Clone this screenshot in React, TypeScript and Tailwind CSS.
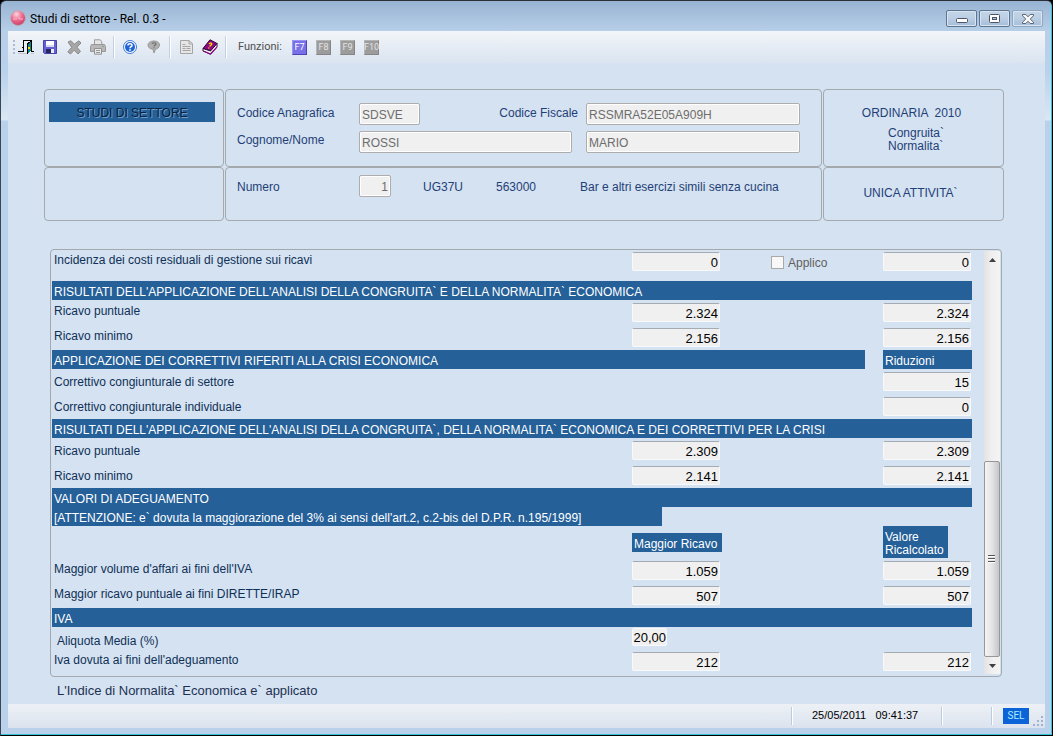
import { useState } from "react";
import type { ReactNode } from "react";

type Row = {
  label: string;
  first?: string;
  second: string;
  low?: boolean;
};

const congruita: Row[] = [
  { label: "Ricavo puntuale", first: "2.324", second: "2.324" },
  { label: "Ricavo minimo", first: "2.156", second: "2.156" },
];

const correttivi: Row[] = [
  { label: "Correttivo congiunturale di settore", second: "15", low: true },
  { label: "Correttivo congiunturale individuale", second: "0", low: true },
];

const risultatiCrisi: Row[] = [
  { label: "Ricavo puntuale", first: "2.309", second: "2.309", low: true },
  { label: "Ricavo minimo", first: "2.141", second: "2.141", low: true },
];

const adeguamento: Row[] = [
  { label: "Maggior volume d'affari ai fini dell'IVA", first: "1.059", second: "1.059" },
  { label: "Maggior ricavo puntuale ai fini DIRETTE/IRAP", first: "507", second: "507" },
];

const rowGrid = "grid grid-cols-[minmax(0,1fr)_88px_163px_88px] pr-px";

function Amount({ value, label }: { value: string; label: string }) {
  return (
    <input
      readOnly
      value={value}
      aria-label={label}
      className="h-[19px] w-full min-w-0 rounded-[2px] border border-t-[#a5abb3] border-x-[#f8f9fb] border-b-[#f8f9fb] bg-[#f0f0f0] px-px pt-0.5 text-right text-[13px] leading-4 text-black outline-none"
    />
  );
}

function DataRow({ row }: { row: Row }) {
  return (
    <div className={`${rowGrid} h-[25px] pt-[3px]`}>
      <span className={`pl-0.5 leading-4 ${row.low ? "pt-0.5" : ""}`}>{row.label}</span>
      {row.first ? <Amount value={row.first} label={row.label} /> : <span />}
      <span />
      <Amount value={row.second} label={`${row.label}, ricalcolato`} />
    </div>
  );
}

function Bar({ children }: { children: ReactNode }) {
  return <h2 className="h-[19px] bg-[#256099] pt-[3px] pl-0.5 leading-4 whitespace-nowrap text-white">{children}</h2>;
}

function Panel({ children }: { children?: ReactNode }) {
  return <div className="rounded-[4px] border border-[#a3a9ad]">{children}</div>;
}

function Field({ id, value, label, right }: { id: string; value: string; label?: string; right?: boolean }) {
  return (
    <input
      id={id}
      readOnly
      value={value}
      aria-label={label}
      className={`h-[22px] w-full min-w-0 rounded-[2px] border border-[#adadad] bg-[#f0f0f0] px-0.5 pt-0.5 text-[#6d6d6d] shadow-[inset_0_0_0_1px_#fff] outline-none ${right ? "text-right" : ""}`}
    />
  );
}

function ToolButton({ label, children }: { label: string; children: ReactNode }) {
  return (
    <button type="button" aria-label={label} className="flex size-6 items-center justify-center">
      {children}
    </button>
  );
}

function KeyButton({ name, active }: { name: string; active?: boolean }) {
  return (
    <button
      type="button"
      className={`flex size-[15px] items-center justify-center border font-['Liberation_Sans_Narrow','Roboto',sans-serif] text-[9px] leading-none ${
        active
          ? "border-t-[#9a93f5] border-r-[#4b44b8] border-b-[#4b44b8] border-l-[#9a93f5] bg-[#7770e6] text-white"
          : "border-t-[#b5b5b5] border-r-[#858585] border-b-[#858585] border-l-[#b5b5b5] bg-[#9c9c9c] text-[#e4e4e4]"
      }`}
    >
      {name}
    </button>
  );
}

function Separator() {
  return <div className="mx-[3px] h-[22px] w-0.5 border-r border-l border-r-white border-l-[#c2d0e0]" />;
}

function TitleBar() {
  const frame =
    "flex h-[17px] w-[31px] items-center justify-center rounded-[2px] border bg-linear-to-b from-[#c3d5e8] via-[#bccfe4] via-45% to-[#a5bdd8] shadow-[inset_0_0_0_1px_#d8e4f0]";
  return (
    <header className="flex h-[30px] items-start">
      <svg width="16" height="16" viewBox="0 0 16 16" className="mt-[9px] ml-0.5">
        <defs>
          <radialGradient id="ball" cx="40%" cy="25%" r="75%">
            <stop offset="0" stopColor="#fbd3df" />
            <stop offset="0.5" stopColor="#ee6f92" />
            <stop offset="1" stopColor="#c83e68" />
          </radialGradient>
        </defs>
        <circle cx="8" cy="8" r="7.5" fill="url(#ball)" stroke="#b5aeb8" />
        <path d="M3 9h2M6 8v2M8 8h2v2M12 8v2" stroke="#f6b9ca" fill="none" />
      </svg>
      <h1 className="mt-[10px] ml-1 flex-1 font-['Roboto',sans-serif] text-xs leading-4 text-black">
        Studi di settore - Rel. 0.3 -
      </h1>
      <div className="mt-[9px] mr-0.5 flex gap-0.5">
        <button type="button" aria-label="Riduci a icona" className={`${frame} border-[#5d7590]`}>
          <svg width="12" height="6" viewBox="0 0 12 6" className="mt-1">
            <rect x="0.5" y="0.5" width="11" height="4" rx="1" fill="#fff" stroke="#4c5567" />
          </svg>
        </button>
        <button type="button" aria-label="Ingrandisci" className={`${frame} border-[#5d7590]`}>
          <svg width="12" height="10" viewBox="0 0 12 10">
            <rect x="0.5" y="0.5" width="10" height="8" rx="1" fill="#fff" stroke="#4c5567" />
            <rect x="3.5" y="3.5" width="4" height="2" fill="#b3c8df" stroke="#4c5567" />
          </svg>
        </button>
        <button type="button" aria-label="Chiudi" className={`${frame} border-[#8fa6c0]`}>
          <svg width="12" height="10" viewBox="0 0 12 10">
            <path
              d="M.5 .5H3.8L6 2.8L8.2 .5H11.5V1.8L8.2 5L11.5 8.2V9.5H8.2L6 7.2L3.8 9.5H.5V8.2L3.8 5L.5 1.8Z"
              fill="#f7f7f7"
              stroke="#5a6375"
            />
          </svg>
        </button>
      </div>
    </header>
  );
}

function Toolbar() {
  return (
    <div className="flex h-8 items-center bg-linear-to-b from-[#f2f5f9] to-[#dae4f0]">
      <svg width="4" height="16" viewBox="0 0 4 16" className="ml-1" shapeRendering="crispEdges">
        <path d="M1 1h2v2H1zM1 5h2v2H1zM1 9h2v2H1zM1 13h2v2H1z" fill="#a9bdd6" />
      </svg>
      <div className="-ml-0.5 flex items-center">
        <ToolButton label="Esci">
          <svg width="16" height="16" viewBox="0 0 16 16" shapeRendering="crispEdges">
            <path d="M0 14.5h9M13 14.5h3" stroke="#c3c8ce" />
            <path d="M0 12.5h5.5V1.5H13.5V12.5H16M5.5 8.5H4" stroke="#000" fill="none" />
            <path d="M9 5L13 2V12L9 15Z" fill="#0e8484" />
            <path d="M9.5 15V5L13 2" stroke="#000" fill="none" />
            <path d="M10 8h2v2h-2z" fill="#ffe000" />
          </svg>
        </ToolButton>
        <ToolButton label="Salva">
          <svg width="14" height="14" viewBox="0 0 14 14">
            <path d="M.5 .5H13.5V13.5H1.5L.5 12.5Z" fill="#6560d4" stroke="#4643a8" />
            <path d="M3 1h8v6H3z" fill="#fff" />
            <path d="M3 5h8v2H3z" fill="#d3d9f2" />
            <path d="M3 9h8v4H3z" fill="#26265c" />
            <path d="M8 9h3v4H8z" fill="#e8eaf5" />
          </svg>
        </ToolButton>
        <ToolButton label="Elimina">
          <svg width="15" height="15" viewBox="0 0 15 15">
            <path
              d="M1 2L4 .7L7.3 4.2L12 .8L14 3L10 7.2L13.5 11.5L11 14L7.2 10.2L3.5 14L.8 12L4.6 7.3Z"
              fill="#a6a6a6"
              stroke="#8c8c8c"
            />
          </svg>
        </ToolButton>
        <ToolButton label="Stampa">
          <svg width="16" height="16" viewBox="0 0 16 16">
            <path d="M4.5 6V.8h5.500l1.800 1.700V6" fill="#e5e5e5" stroke="#999" />
            <path d="M1.5 5.500h13l1 2V12.500H.5V7.500Z" fill="#b8b8b8" stroke="#989898" />
            <path d="M4.5 9.500h7V15.200h-7z" fill="#e8e8e8" stroke="#929292" />
            <path d="M6 11.500h4M6 13.500h4M12 7.500h2" stroke="#999" />
          </svg>
        </ToolButton>
      </div>
      <Separator />
      <ToolButton label="Guida">
        <svg width="14" height="14" viewBox="0 0 14 14">
          <circle cx="7" cy="7" r="6.500" fill="#fff" stroke="#3f7bd6" />
          <circle cx="7" cy="7" r="5" fill="#1f64d6" />
          <path d="M5 5.500C5 3.300 9 3.300 9 5.400C9 6.700 7 6.700 7 8.200" fill="none" stroke="#fff" strokeWidth="1.500" />
          <circle cx="7" cy="10" r="0.900" fill="#fff" />
        </svg>
      </ToolButton>
      <ToolButton label="Suggerimento">
        <svg width="14" height="14" viewBox="0 0 14 14">
          <path
            d="M7 1C10.500 1 12.500 2.800 12.500 5C12.500 7.500 10 9 8.500 9.200L7 13L6 9.200C3 9 1 7.500 1 5C1 2.800 3.500 1 7 1Z"
            fill="#b0b0b0"
            stroke="#989898"
          />
          <path d="M5 4C5 2.300 9 2.300 9 4C9 5.200 7 5 7 6.300M7 7.200v1" fill="none" stroke="#6e6e6e" strokeWidth="1.200" />
        </svg>
      </ToolButton>
      <Separator />
      <ToolButton label="Documento">
        <svg width="13" height="14" viewBox="0 0 13 14">
          <path d="M.5 .5H9L12.500 3.500V13.500H.5Z" fill="#e6e6e6" stroke="#a4a4a4" />
          <path d="M2.500 4.500h3M2.500 6.500h8M2.500 8.500h3M6.500 8.500h4M2.500 10.500h8M9 1v3h3" stroke="#a4a4a4" fill="none" />
        </svg>
      </ToolButton>
      <ToolButton label="Manuale">
        <svg width="16" height="16" viewBox="0 0 16 16">
          <path d="M1 9.500L8 .8L15 4.500L8.500 12Z" fill="#8c0a84" stroke="#30022c" />
          <path d="M1 9.500V12L8.500 15.200L15 7.800V4.500L8.500 12Z" fill="#fff" stroke="#30022c" />
          <path d="M1.500 12L8.500 15L15 8" fill="none" stroke="#8c0a84" strokeWidth="1.200" />
          <path d="M7 5C8 3.300 10.500 4.300 9.500 5.700C9 6.500 8 6.300 7.700 7.500M7 8.500L6.500 9.500" fill="none" stroke="#ffd900" strokeWidth="1.300" />
        </svg>
      </ToolButton>
      <Separator />
      <span className="ml-2 w-[54px] font-['Roboto',sans-serif] text-[11px] text-[#4f4f4f]">Funzioni:</span>
      <div className="flex gap-[9px]">
        <KeyButton name="F7" active />
        <KeyButton name="F8" />
        <KeyButton name="F9" />
        <KeyButton name="F10" />
      </div>
    </div>
  );
}

function Summary() {
  return (
    <section className="grid grid-cols-[180px_minmax(0,1fr)_181px] grid-rows-[78px_54px] gap-x-px text-[#1f3f77]">
      <Panel>
        <h2 className="mt-3 mr-2 ml-1 h-5 bg-[#256099] pt-[3px] text-center leading-4 text-[#0a2340] [text-shadow:1px_1px_0_#6f9cc8]">
          STUDI DI SETTORE
        </h2>
      </Panel>
      <Panel>
        <div className="grid grid-cols-[122px_minmax(0,213fr)_14px_minmax(0,214fr)] gap-y-1.5 pt-[13px] pr-[21px] pl-[11px]">
          <label htmlFor="codice" className="pt-0.5 leading-4">
            Codice Anagrafica
          </label>
          <div className="flex justify-between">
            <div className="w-[61px]">
              <Field id="codice" value="SDSVE" />
            </div>
            <label htmlFor="fiscale" className="-mr-1.5 pt-0.5 leading-4">
              Codice Fiscale
            </label>
          </div>
          <span />
          <Field id="fiscale" value="RSSMRA52E05A909H" />
          <label htmlFor="cognome" className="pt-px leading-4">
            Cognome/Nome
          </label>
          <Field id="cognome" value="ROSSI" />
          <span />
          <Field id="nome" value="MARIO" label="Nome" />
        </div>
      </Panel>
      <Panel>
        <div className="pt-[15px] pr-1 text-center leading-4 whitespace-pre">ORDINARIA  2010</div>
        <div className="mt-1.5 pl-16 leading-[13px]">
          Congruita`
          <br />
          Normalita`
        </div>
      </Panel>
      <Panel />
      <Panel>
        <div className="flex pt-[7px] pl-[11px] leading-4">
          <label htmlFor="numero" className="w-[122px] pt-1">
            Numero
          </label>
          <div className="w-8">
            <Field id="numero" value="1" right />
          </div>
          <span className="w-[73px] pt-1 pl-8">UG37U</span>
          <span className="w-[84px] pt-1 pl-8">563000</span>
          <span className="pt-1 pl-8">Bar e altri esercizi simili senza cucina</span>
        </div>
      </Panel>
      <Panel>
        <div className="pt-[17px] pr-1.5 text-center leading-4">UNICA ATTIVITA`</div>
      </Panel>
    </section>
  );
}

function ScrollBar() {
  return (
    <div className="flex w-4 flex-col bg-linear-to-r from-[#e3e3e3] via-[#f0f0f0] to-[#f4f4f4]">
      <button type="button" aria-label="Scorri su" className="flex h-[17px] items-center justify-center">
        <svg width="7" height="4" viewBox="0 0 7 4">
          <path d="M3.500 0L7 4H0Z" fill="#404040" />
        </svg>
      </button>
      <div className="flex-1" />
      <div className="flex h-[196px] items-center justify-center rounded-[2px] border border-[#979797] bg-linear-to-r from-[#f5f5f5] via-[#e4e4e6] via-50% to-[#c3c5c9]">
        <svg width="8" height="9" viewBox="0 0 8 9" shapeRendering="crispEdges">
          <path d="M0 .5h7M0 3.500h7M0 6.500h7" stroke="#555" />
          <path d="M0 1.500h7M0 4.500h7M0 7.500h7" stroke="#fff" />
        </svg>
      </div>
      <button type="button" aria-label="Scorri giù" className="flex h-[17px] items-center justify-center">
        <svg width="7" height="4" viewBox="0 0 7 4">
          <path d="M0 0H7L3.500 4Z" fill="#404040" />
        </svg>
      </button>
    </div>
  );
}

function Results() {
  const [applico, setApplico] = useState(false);
  const [aliquota, setAliquota] = useState("20,00");

  return (
    <section className="mr-0.5 ml-1.5 flex rounded-[4px] border border-[#a3a9ad] pr-px pb-0.5 pl-px">
      <div className="min-w-0 flex-1 text-[#0f3057]">
        <div className={`${rowGrid} h-[31px] pt-0.5`}>
          <span className="pl-0.5 leading-4">Incidenza dei costi residuali di gestione sui ricavi</span>
          <Amount value="0" label="Incidenza dei costi residuali" />
          <label className="flex h-[21px] items-center gap-1 pl-[51px] text-[#5f5f5f]">
            <input
              type="checkbox"
              checked={applico}
              onChange={(e) => setApplico(e.target.checked)}
              className="size-[13px] appearance-none border border-[#a9a9a9] bg-[#f8f8f8] checked:bg-[#256099]"
            />
            Applico
          </label>
          <Amount value="0" label="Incidenza, ricalcolato" />
        </div>

        <Bar>RISULTATI DELL'APPLICAZIONE DELL'ANALISI DELLA CONGRUITA` E DELLA NORMALITA` ECONOMICA</Bar>
        {congruita.map((row) => (
          <DataRow key={row.label} row={row} />
        ))}

        <div className="flex gap-[18px]">
          <div className="flex-1">
            <Bar>APPLICAZIONE DEI CORRETTIVI RIFERITI ALLA CRISI ECONOMICA</Bar>
          </div>
          <div className="w-[89px]">
            <Bar>Riduzioni</Bar>
          </div>
        </div>
        {correttivi.map((row) => (
          <DataRow key={row.label} row={row} />
        ))}

        <Bar>RISULTATI DELL'APPLICAZIONE DELL'ANALISI DELLA CONGRUITA`, DELLA NORMALITA` ECONOMICA E DEI CORRETTIVI PER LA CRISI</Bar>
        {risultatiCrisi.map((row) => (
          <DataRow key={row.label} row={row} />
        ))}

        <Bar>VALORI DI ADEGUAMENTO</Bar>
        <p className="mr-[310px] h-[19px] bg-[#256099] pt-[3px] pl-0.5 leading-4 whitespace-nowrap text-white">
          [ATTENZIONE: e` dovuta la maggiorazione del 3% ai sensi dell'art.2, c.2-bis del D.P.R. n.195/1999]
        </p>
        <div className={`${rowGrid} h-8 text-white`}>
          <span />
          <div className="mt-[7px] h-[19px] w-[90px] bg-[#256099] pt-[3px] pl-0.5 leading-4 whitespace-nowrap">Maggior Ricavo</div>
          <span />
          <div className="h-8 w-[65px] bg-[#256099] pt-[5px] pl-0.5 leading-[13px]">Valore Ricalcolato</div>
        </div>
        {adeguamento.map((row) => (
          <DataRow key={row.label} row={row} />
        ))}

        <Bar>IVA</Bar>
        <div className={`${rowGrid} h-[22px]`}>
          <label htmlFor="aliquota" className="pt-1.5 pl-[5px] leading-4">
            Aliquota Media (%)
          </label>
          <input
            id="aliquota"
            value={aliquota}
            onChange={(e) => setAliquota(e.target.value)}
            className="mt-px h-[18px] w-[35px] rounded-[2px] border border-[#f8f9fb] bg-[#f0f0f0] text-right text-[13px] leading-4 text-black outline-none"
          />
        </div>
        <DataRow row={{ label: "Iva dovuta ai fini dell'adeguamento", first: "212", second: "212" }} />
      </div>
      <div className="ml-3 flex pt-px">
        <ScrollBar />
      </div>
    </section>
  );
}

function StatusBar() {
  const cell = "h-[18px] border-l border-[#b9cde2] shadow-[inset_1px_0_0_#fff]";
  return (
    <footer className="flex h-6 items-center justify-end bg-linear-to-b from-[#edf1f6] to-[#dce3ee]">
      <div className={`${cell} w-[150px] pl-5 text-[11px] leading-4 whitespace-pre text-black`}>
        25/05/2011   09:41:37
      </div>
      <div className={`${cell} w-[50px]`} />
      <div className={`${cell} w-3`} />
      <div className="h-4 w-[26px] bg-[#0a64d8] text-center font-['Roboto',sans-serif] text-[10px] leading-4 text-[#a8ecff]">SEL</div>
      <svg width="12" height="12" viewBox="0 0 12 12" className="ml-1 self-end" shapeRendering="crispEdges">
        <path d="M8 0h2v2H8zM8 4h2v2H8zM8 8h2v2H8zM4 4h2v2H4zM4 8h2v2H4zM0 8h2v2H0z" fill="#9fb4d0" />
      </svg>
    </footer>
  );
}

export default function App() {
  return (
    <div className="min-h-screen bg-black font-['Liberation_Sans',Arial,sans-serif] text-xs">
      <div className="flex min-h-screen flex-col rounded-t-[6px] border-t border-r border-b border-l border-t-[#2a2f38] border-r-black border-b-black border-l-[#3a4656] bg-[linear-gradient(to_bottom,#98b3d2_0,#b7cfe8_30px,#b9d1ea_70px,#dae7f4_119px,#b9d1ea_120px)] px-[7px] pb-[7px] shadow-[inset_-1px_-1px_0_#35c3d8]">
        <TitleBar />
        <main className="flex flex-1 flex-col bg-[#d5e2f1]">
          <Toolbar />
          <div className="flex flex-1 flex-col pt-[26px] pr-[41px] pl-9">
            <Summary />
            <div className="mt-7">
              <Results />
            </div>
            <p className="mt-1.5 pl-[13px] text-[13px] leading-4 text-[#1c3152]">L'Indice di Normalita` Economica e` applicato</p>
          </div>
          <StatusBar />
        </main>
      </div>
    </div>
  );
}
